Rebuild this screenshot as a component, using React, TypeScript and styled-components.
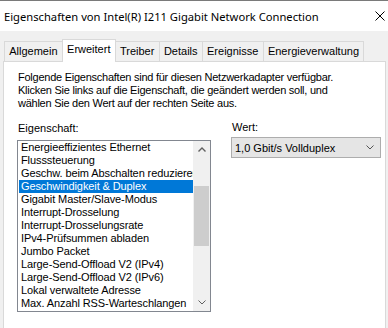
import styled, { createGlobalStyle } from "styled-components";

const GlobalStyle = createGlobalStyle`
  body {
    margin: 0;
    background: #f0f0f0;
  }
`;

const Window = styled.div`
  width: 388px;
  height: 328px;
  overflow: hidden;
  display: flex;
  flex-direction: column;
  box-sizing: border-box;
  border-top: 1px solid #7a7a7a;
  background: #f0f0f0;
  font-family: "Liberation Sans", Arial, sans-serif;
  font-size: 11px;
  color: #000;
`;

const TitleBar = styled.div`
  height: 30px;
  flex-shrink: 0;
  display: flex;
  align-items: center;
  justify-content: space-between;
  padding: 0 3px 0 4px;
  background: #fff;
  font-family: "Noto Sans", sans-serif;
  font-size: 11.2px;
`;

const Body = styled.div`
  flex: 1;
  padding: 8px 2px 0 3px;
`;

const TabStrip = styled.div`
  display: flex;
  align-items: flex-end;
  height: 22px;
  padding-left: 1px;
`;

const Tab = styled.div<{ $active?: boolean }>`
  position: relative;
  box-sizing: border-box;
  height: ${(p) => (p.$active ? "23px" : "20px")};
  margin-bottom: ${(p) => (p.$active ? "-1px" : "0")};
  margin-right: -1px;
  padding: 0 4.25px;
  line-height: 19px;
  border: 1px solid #d9d9d9;
  border-bottom: none;
  background: ${(p) => (p.$active ? "#fff" : "#f0f0f0")};
  z-index: ${(p) => (p.$active ? 2 : 1)};
  white-space: nowrap;
`;

const Panel = styled.div`
  box-sizing: border-box;
  height: 290px;
  padding: 9px 13px 0 13px;
  background: #fff;
  border: 1px solid #d9d9d9;
`;

const Description = styled.p`
  margin: 0 0 0 1px;
  line-height: 13px;
  letter-spacing: -0.25px;
`;

const Fields = styled.div`
  display: flex;
  gap: 20px;
  margin-top: 12px;
`;

const Column = styled.div<{ $width: number; $gap: number }>`
  display: flex;
  flex-direction: column;
  width: ${(p) => p.$width}px;
  gap: ${(p) => p.$gap}px;
`;

const Label = styled.div<{ $shift?: number }>`
  line-height: 13px;
  margin-left: 1px;
  margin-top: ${(p) => p.$shift ?? 0}px;
`;

const ListBox = styled.div`
  display: flex;
  box-sizing: border-box;
  width: 194px;
  height: 172px;
  border: 1px solid #828790;
  background: #fff;
`;

const Items = styled.div`
  flex: 1;
  min-width: 0;
  overflow: hidden;
  padding-left: 1px;
`;

const Item = styled.div<{ $selected?: boolean }>`
  height: 13px;
  line-height: 13px;
  padding-left: 2px;
  white-space: nowrap;
  overflow: hidden;
  letter-spacing: -0.1px;
  background: ${(p) => (p.$selected ? "#0078d7" : "transparent")};
  color: ${(p) => (p.$selected ? "#fff" : "#000")};
`;

const ScrollBar = styled.div`
  width: 17px;
  flex-shrink: 0;
  display: flex;
  flex-direction: column;
  background: #f0f0f0;
`;

const ScrollButton = styled.div`
  height: 17px;
  display: flex;
  align-items: center;
  justify-content: center;
`;

const Track = styled.div`
  flex: 1;
`;

const Thumb = styled.div`
  height: 60px;
  margin: 28px 1px 0 1px;
  background: #cdcdcd;
`;

const Select = styled.div`
  box-sizing: border-box;
  width: 150px;
  height: 21px;
  display: flex;
  align-items: center;
  justify-content: space-between;
  padding: 0 6px 0 3px;
  background: #e5e5e5;
  border: 1px solid #adadad;
`;

const Chevron = ({ up, color }: { up?: boolean; color: string }) => (
  <svg width="8" height="5" viewBox="0 0 8 5">
    <polyline
      points={up ? "0.5,4.5 4,1 7.5,4.5" : "0.5,0.5 4,4 7.5,0.5"}
      fill="none"
      stroke={color}
      strokeWidth={up ? 1.4 : 1}
    />
  </svg>
);

const tabs = ["Allgemein", "Erweitert", "Treiber", "Details", "Ereignisse", "Energieverwaltung"];

const properties = [
  "Energieeffizientes Ethernet",
  "Flusssteuerung",
  "Geschw. beim Abschalten reduzieren",
  "Geschwindigkeit & Duplex",
  "Gigabit Master/Slave-Modus",
  "Interrupt-Drosselung",
  "Interrupt-Drosselungsrate",
  "IPv4-Prüfsummen abladen",
  "Jumbo Packet",
  "Large-Send-Offload V2 (IPv4)",
  "Large-Send-Offload V2 (IPv6)",
  "Lokal verwaltete Adresse",
  "Max. Anzahl RSS-Warteschlangen",
];

const App = () => {
  return (
    <>
      <GlobalStyle />
      <Window>
        <TitleBar>
          <span>Eigenschaften von Intel(R) I211 Gigabit Network Connection</span>
          <svg width="10" height="10" viewBox="0 0 10 10">
            <path d="M0.5 0.5 L9.5 9.5 M9.5 0.5 L0.5 9.5" stroke="#000" strokeWidth="1" />
          </svg>
        </TitleBar>
        <Body>
          <TabStrip>
            {tabs.map((t) => (
              <Tab key={t} $active={t === "Erweitert"}>
                {t}
              </Tab>
            ))}
          </TabStrip>
          <Panel>
            <Description>
              Folgende Eigenschaften sind für diesen Netzwerkadapter verfügbar.
              <br />
              Klicken Sie links auf die Eigenschaft, die geändert werden soll, und
              <br />
              wählen Sie den Wert auf der rechten Seite aus.
            </Description>
            <Fields>
              <Column $width={194} $gap={5}>
                <Label>Eigenschaft:</Label>
                <ListBox>
                  <Items>
                    {properties.map((p) => (
                      <Item key={p} $selected={p === "Geschwindigkeit & Duplex"}>
                        {p}
                      </Item>
                    ))}
                  </Items>
                  <ScrollBar>
                    <ScrollButton>
                      <Chevron up color="#606060" />
                    </ScrollButton>
                    <Track>
                      <Thumb />
                    </Track>
                    <ScrollButton>
                      <Chevron color="#606060" />
                    </ScrollButton>
                  </ScrollBar>
                </ListBox>
              </Column>
              <Column $width={150} $gap={3}>
                <Label $shift={-1}>Wert:</Label>
                <Select>
                  <span>1,0 Gbit/s Vollduplex</span>
                  <Chevron color="#555" />
                </Select>
              </Column>
            </Fields>
          </Panel>
        </Body>
      </Window>
    </>
  );
};

export default App;
